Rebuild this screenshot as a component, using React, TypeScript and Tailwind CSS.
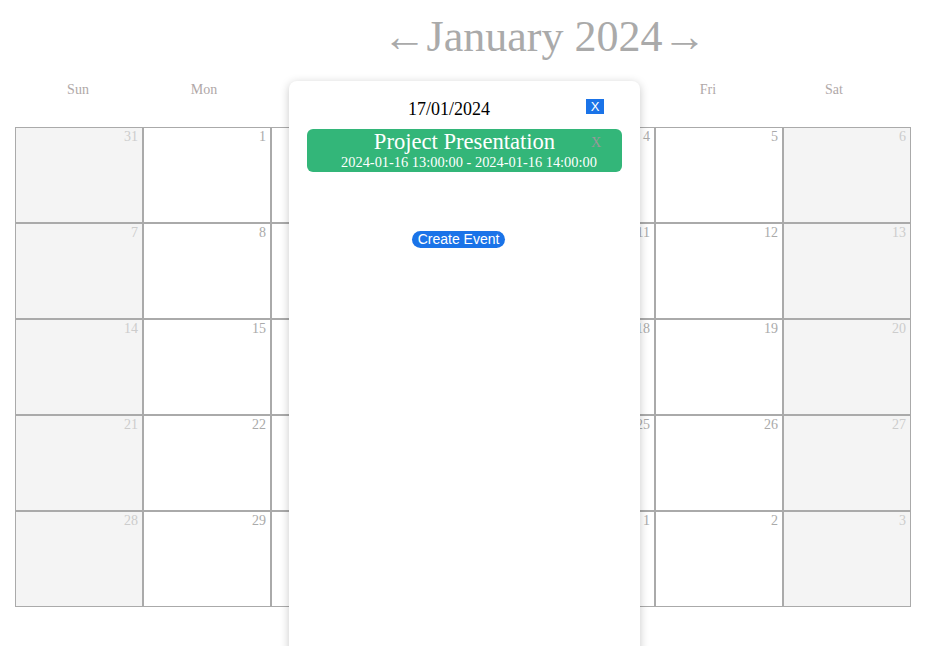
import React from "react";

interface Day {
  n: number;
  weekend: boolean;
}

const weekdays = ["Sun", "Mon", "Tue", "Wed", "Thu", "Fri", "Sat"];

const days: Day[] = [31, 1, 2, 3, 4, 5, 6, 7, 8, 9, 10, 11, 12, 13, 14, 15, 16, 17, 18, 19, 20, 21, 22, 23, 24, 25, 26, 27, 28, 29, 30, 31, 1, 2, 3].map(
  (n, i) => ({ n, weekend: i % 7 === 0 || i % 7 === 6 })
);

const serif = "font-['Liberation_Serif','Times_New_Roman',serif]";

const App: React.FC = () => {
  return (
    <div className={`relative h-[646px] overflow-hidden bg-white ${serif}`}>
      <div className="flex justify-center pl-[146px] pt-[11px] text-[44px] leading-[52px] text-[#aaaaaa]">
        <span className="cursor-pointer">←</span>
        <span>January 2024</span>
        <span className="cursor-pointer">→</span>
      </div>

      <div className="mx-[15px] mt-[15px] grid w-[882px] grid-cols-7">
        {weekdays.map((d) => (
          <div key={d} className="h-[49px] text-center text-[14px] leading-[23px] text-[#b0a8a8]">
            {d}
          </div>
        ))}
      </div>

      <div className="mx-[15px] grid w-[896px] grid-cols-7">
        {days.map((d, i) => (
          <div
            key={i}
            className={`h-[96px] border border-[#aaaaaa] pr-[4px] pt-[1px] text-right text-[14px] leading-[16px] ${
              d.weekend ? "bg-[#f4f4f4] text-[#cccccc]" : "bg-white text-[#aaaaaa]"
            }`}
          >
            {d.n}
          </div>
        ))}
      </div>

      {/* day popup */}
      <div className="absolute left-[289px] top-[81px] h-[600px] w-[351px] rounded-[8px] bg-white px-[18px] pt-[16px] shadow-[0_2px_10px_rgba(0,0,0,0.22)]">
        <div className="flex items-center">
          <div className="flex-1 pl-[5px] text-center text-[18px] leading-[24px] text-black">17/01/2024</div>
          <button className="mb-[5px] mr-[18px] h-[15px] w-[18px] bg-[#1a73e8] font-['Liberation_Sans',Arial,sans-serif] text-[13px] leading-[15px] text-white">
            X
          </button>
        </div>
        <div className="relative mt-[8px] h-[43px] rounded-[6px] bg-[#33b679] pt-[1px] text-center text-white">
          <div className="text-[22.6px] leading-[24px]">Project Presentation</div>
          <div className="pl-[9px] text-[14.4px] leading-[17px]">2024-01-16 13:00:00 - 2024-01-16 14:00:00</div>
          <span className="absolute right-[21px] top-[6px] text-[14px] leading-[16px] text-[#999999]">X</span>
        </div>
        <div className="mt-[59px] flex justify-center pr-[12px]">
          <button className="h-[17px] rounded-full bg-[#1a73e8] px-[6px] font-['Liberation_Sans',Arial,sans-serif] text-[14px] leading-[17px] text-white">
            Create Event
          </button>
        </div>
      </div>
    </div>
  );
};

export default App;
